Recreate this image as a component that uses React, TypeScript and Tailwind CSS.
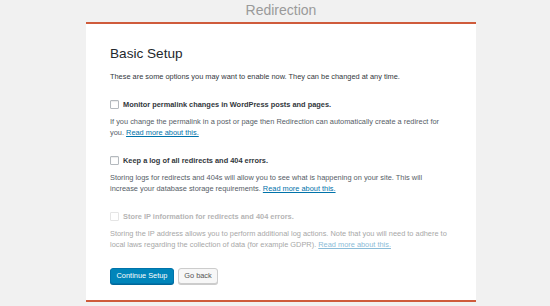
import React from 'react';

const Checkbox: React.FC<{ disabled?: boolean }> = ({ disabled }) => (
    <span
        className={
            disabled
                ? 'block w-[9px] h-[9px] shrink-0 border border-[#e5e5e5] bg-white rounded-[1px]'
                : 'block w-[9px] h-[9px] shrink-0 border border-[#b4b9be] bg-white rounded-[1px] shadow-[inset_0_1px_1px_rgba(0,0,0,0.08)]'
        }
    />
);

const ReadMore: React.FC<{ disabled?: boolean }> = ({ disabled }) => (
    <a href="#" className={disabled ? 'text-[#8cbcd8] underline' : 'text-[#0073aa] underline'}>
        Read more about this.
    </a>
);

interface OptionProps {
    label: string;
    text: string;
    disabled?: boolean;
}

const Option: React.FC<OptionProps> = ({ label, text, disabled }) => (
    <div className="mt-[18px]">
        <label className="flex items-center gap-[4px] h-[9px]">
            <Checkbox disabled={disabled} />
            <span className={disabled ? 'font-bold text-[#b5b5b5]' : 'font-bold text-[#32373c]'}>{label}</span>
        </label>
        <p className={disabled ? 'mt-[7px] leading-[11px] text-[#a7a7a7]' : 'mt-[7px] leading-[11px] text-[#555d66]'}>
            {text} <ReadMore disabled={disabled} />
        </p>
    </div>
);

export default function App() {
    return (
        <div className="min-h-[306px] bg-[#f1f1f1] font-['Liberation_Sans',Arial,sans-serif] overflow-hidden">
            <div className="ml-[86px] w-[390px]">
                <h1 className="h-[22px] pt-[1px] text-center text-[14px] leading-[19px] text-[#9a9a9a]">Redirection</h1>
                <div className="bg-white border-t-2 border-b-2 border-[#cf5b3b] px-[24px] pt-[22px] pb-[16px] text-[7.4px]">
                    <h2 className="text-[13.6px] leading-[16px] text-[#23282d]">Basic Setup</h2>
                    <p className="mt-[10px] leading-[10px] text-[#32373c]">
                        These are some options you may want to enable now. They can be changed at any time.
                    </p>

                    <Option
                        label="Monitor permalink changes in WordPress posts and pages."
                        text="If you change the permalink in a post or page then Redirection can automatically create a redirect for you."
                    />
                    <Option
                        label="Keep a log of all redirects and 404 errors."
                        text="Storing logs for redirects and 404s will allow you to see what is happening on your site. This will increase your database storage requirements."
                    />
                    <Option
                        disabled
                        label="Store IP information for redirects and 404 errors."
                        text="Storing the IP address allows you to perform additional log actions. Note that you will need to adhere to local laws regarding the collection of data (for example GDPR)."
                    />

                    <div className="mt-[18px] flex gap-[4px]">
                        <button className="h-[16px] w-[64px] rounded-[3px] border border-[#0073aa] bg-[#0085ba] text-white shadow-[0_1px_0_#006799] text-[7.4px]">
                            Continue Setup
                        </button>
                        <button className="h-[16px] w-[40px] rounded-[3px] border border-[#cccccc] bg-[#f7f7f7] text-[#555555] shadow-[0_1px_0_#cccccc] text-[7.4px]">
                            Go back
                        </button>
                    </div>
                </div>
            </div>
        </div>
    );
}
